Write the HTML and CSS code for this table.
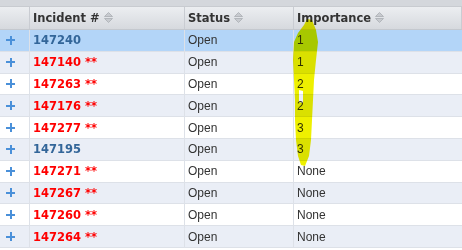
FILE: index.html
```html
<!DOCTYPE html>
<html>
<head>
<meta charset="utf-8">
<link rel="stylesheet" href="styles.css">
</head>
<body>
<div class="grid">
  <div class="topstrip"></div>
  <div class="row head">
    <div class="cell"></div>
    <div class="cell">Incident #<svg class="sort" width="9" height="11" viewBox="0 0 9 11"><path d="M4.5 0.5 L8.5 4.5 L0.5 4.5 Z M0.5 6.5 L8.5 6.5 L4.5 10.5 Z" fill="#c7cacf" stroke="#a9adb3" stroke-width="0.8"/></svg></div>
    <div class="cell">Status<svg class="sort" width="9" height="11" viewBox="0 0 9 11"><path d="M4.5 0.5 L8.5 4.5 L0.5 4.5 Z M0.5 6.5 L8.5 6.5 L4.5 10.5 Z" fill="#c7cacf" stroke="#a9adb3" stroke-width="0.8"/></svg></div>
    <div class="cell">Importance<svg class="sort" width="9" height="11" viewBox="0 0 9 11"><path d="M4.5 0.5 L8.5 4.5 L0.5 4.5 Z M0.5 6.5 L8.5 6.5 L4.5 10.5 Z" fill="#c7cacf" stroke="#a9adb3" stroke-width="0.8"/></svg></div>
  </div>
  <div class="row sel"><div class="cell"><span class="plus"></span></div><div class="cell num blue">147240</div><div class="cell">Open</div><div class="cell">1</div></div>
  <div class="row alt"><div class="cell"><span class="plus"></span></div><div class="cell num red">147140 **</div><div class="cell">Open</div><div class="cell">1</div></div>
  <div class="row"><div class="cell"><span class="plus"></span></div><div class="cell num red">147263 **</div><div class="cell">Open</div><div class="cell">2</div></div>
  <div class="row alt"><div class="cell"><span class="plus"></span></div><div class="cell num red">147176 **</div><div class="cell">Open</div><div class="cell">2</div></div>
  <div class="row"><div class="cell"><span class="plus"></span></div><div class="cell num red">147277 **</div><div class="cell">Open</div><div class="cell">3</div></div>
  <div class="row alt"><div class="cell"><span class="plus"></span></div><div class="cell num blue">147195</div><div class="cell">Open</div><div class="cell">3</div></div>
  <div class="row"><div class="cell"><span class="plus"></span></div><div class="cell num red">147271 **</div><div class="cell">Open</div><div class="cell">None</div></div>
  <div class="row alt"><div class="cell"><span class="plus"></span></div><div class="cell num red">147267 **</div><div class="cell">Open</div><div class="cell">None</div></div>
  <div class="row"><div class="cell"><span class="plus"></span></div><div class="cell num red">147260 **</div><div class="cell">Open</div><div class="cell">None</div></div>
  <div class="row alt"><div class="cell"><span class="plus"></span></div><div class="cell num red">147264 **</div><div class="cell">Open</div><div class="cell">None</div></div>
  <svg class="marker" width="462" height="250" viewBox="0 0 462 250">
    <path fill-rule="evenodd" fill="#eef000" d="M307 19 L312 20 L316 30 L318 42 L316 60 L314 80 L313 100 L312 120 L311 140 L309 156 L305 166 L301 165 L298 156 L296 140 L295 120 L295 100 L294 80 L293 60 L294 42 L298 33 L304 25 Z M299 90 L303 91 L303 103 L299 102 Z"/>
  </svg>
</div>
</body>
</html>
```

FILE: styles.css
```css
html, body {
  margin: 0;
  padding: 0;
  background: #ffffff;
}
.grid {
  position: relative;
  width: 462px;
  height: 250px;
  overflow: hidden;
  font-family: "Liberation Sans", Arial, sans-serif;
  font-size: 12px;
  color: #333;
}
.topstrip {
  height: 7px;
  background: #d4d7dc;
  border-bottom: 1px solid #c8cbd0;
  box-sizing: border-box;
}
.row {
  display: grid;
  grid-template-columns: 30px 155px 109px 1fr;
  height: 21.8px;
  box-sizing: border-box;
  border-bottom: 1px solid #dde1e8;
}
.cell {
  display: flex;
  align-items: center;
  padding-left: 3px;
  border-right: 1px solid #dde1e8;
  white-space: nowrap;
  overflow: hidden;
}
.cell:last-child {
  border-right: none;
}
.head {
  height: 23px;
  background: linear-gradient(#eceef1, #d6d9de);
  border-bottom: 1px solid #c4c8ce;
  font-family: "DejaVu Sans", Verdana, sans-serif;
  font-weight: bold;
  font-size: 11.5px;
  color: #333;
}
.head .cell {
  border-right: 1px solid #c9ccd2;
  padding-bottom: 1px;
}
.sort {
  margin-left: 4px;
}
.sel {
  background: #b3d5f8;
}
.alt {
  background: #eaeef6;
}
.num {
  font-family: "DejaVu Sans", Verdana, sans-serif;
  font-weight: bold;
  font-size: 11.5px;
}
.blue { color: #336699; }
.red { color: #ff0000; }
.plus {
  position: relative;
  width: 9px;
  height: 9px;
  margin-left: 3px;
}
.plus::before, .plus::after {
  content: "";
  position: absolute;
  background: #4a90d9;
}
.plus::before {
  left: 0; top: 3.5px; width: 9px; height: 2px;
}
.plus::after {
  top: 0; left: 3.5px; width: 2px; height: 9px;
}
.marker {
  position: absolute;
  left: 0;
  top: 0;
  mix-blend-mode: multiply;
  pointer-events: none;
}
```
